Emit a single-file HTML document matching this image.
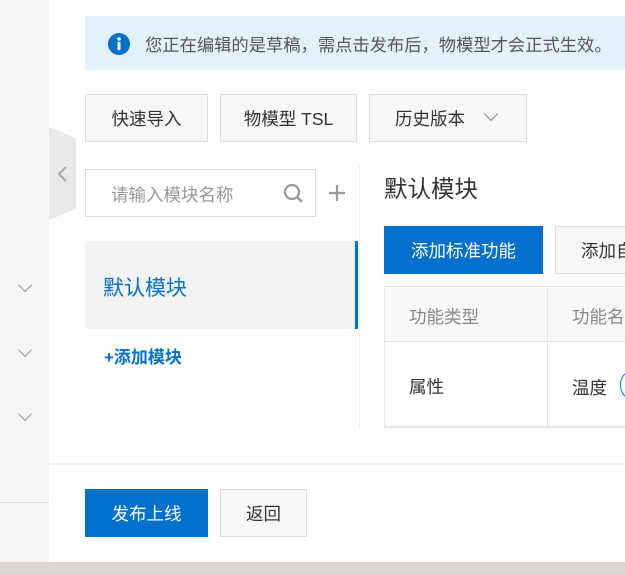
<!DOCTYPE html>
<html><head><meta charset="utf-8"><style>
*{box-sizing:border-box;margin:0;padding:0}
body{width:625px;height:575px;overflow:hidden;background:#dbd7d3;font-family:"Liberation Sans","Noto Sans CJK SC",sans-serif;position:relative}
.a{position:absolute;white-space:nowrap}
.btn{position:absolute;background:#f7f7f7;border:1px solid #dcdcdc;color:#333;font-size:17.5px;display:flex;align-items:center;justify-content:center;white-space:nowrap}
.pri{background:#0070cc;border-color:#0070cc;color:#fff}
.chev{position:absolute;width:10px;height:10px;border-right:1.6px solid #999;border-bottom:1.6px solid #999;transform:rotate(45deg)}
</style></head><body>
<div class="a" style="left:0;top:0;width:49px;height:562px;background:#f5f5f5"></div>
<div class="a" style="left:0;top:502px;width:49px;height:1px;background:#ddd"></div>
<div class="chev" style="left:20px;top:280px"></div>
<div class="chev" style="left:20px;top:345px"></div>
<div class="chev" style="left:20px;top:409px"></div>
<div class="a" style="left:49px;top:0;width:576px;height:562px;background:#fff"></div>
<svg class="a" style="left:49px;top:127px" width="28" height="94"><polygon points="0,0 27,11 27,82 0,93" fill="#e8e8e8"/><polyline points="17,40 10,47 17,54" fill="none" stroke="#aaa" stroke-width="2"/></svg>
<div class="a" style="left:85px;top:16px;width:540px;height:54px;background:#e3f1fd"></div>
<svg class="a" style="left:108px;top:33px" width="22" height="22"><circle cx="11" cy="11" r="11" fill="#0070cc"/><circle cx="11" cy="6" r="1.8" fill="#fff"/><rect x="9.5" y="9" width="3" height="8" fill="#fff"/></svg>
<div class="a" style="left:145px;top:31px;font-size:17.3px;color:#555">您正在编辑的是草稿，需点击发布后，物模型才会正式生效。</div>
<div class="btn" style="left:85px;top:94px;width:123px;height:48px">快速导入</div>
<div class="btn" style="left:220px;top:94px;width:137px;height:48px">物模型 TSL</div>
<div class="btn" style="left:369px;top:94px;width:158px;height:48px;justify-content:flex-start;padding-left:25px">历史版本</div>
<div class="chev" style="left:486px;top:109px;border-color:#888"></div>
<div class="a" style="left:85px;top:169px;width:231px;height:48px;border:1px solid #dcdcdc"></div>
<div class="a" style="left:111px;top:182px;font-size:17.5px;color:#999">请输入模块名称</div>
<svg class="a" style="left:283px;top:183px" width="22" height="22"><circle cx="9" cy="9" r="7" fill="none" stroke="#999" stroke-width="2.2"/><line x1="14" y1="14" x2="19" y2="19" stroke="#999" stroke-width="2.4"/></svg>
<svg class="a" style="left:328px;top:184px" width="18" height="18"><path d="M9 1V17M1 9H17" stroke="#999" stroke-width="2.2"/></svg>
<div class="a" style="left:359px;top:165px;width:1px;height:264px;background:#eee"></div>
<div class="a" style="left:85px;top:241px;width:273px;height:88px;background:#f3f3f3"></div>
<div class="a" style="left:355px;top:241px;width:3px;height:88px;background:#0070cc"></div>
<div class="a" style="left:103px;top:272px;font-size:21px;color:#0070cc">默认模块</div>
<div class="a" style="left:104px;top:343px;font-size:17px;color:#0070cc;font-weight:bold">+添加模块</div>
<div class="a" style="left:384px;top:170px;font-size:23.5px;color:#333">默认模块</div>
<div class="btn pri" style="left:384px;top:226px;width:159px;height:48px">添加标准功能</div>
<div class="btn" style="left:555px;top:226px;width:90px;height:48px;justify-content:flex-start;padding-left:25px;overflow:hidden">添加自定义</div>
<div class="a" style="left:384px;top:286px;width:260px;height:142px;border:1px solid #e6e6e6;border-bottom-width:2px"></div>
<div class="a" style="left:385px;top:287px;width:240px;height:55px;background:#f9f9f9;border-bottom:1px solid #e6e6e6"></div>
<div class="a" style="left:547px;top:287px;width:1px;height:140px;background:#e6e6e6"></div>
<div class="a" style="left:409px;top:304px;font-size:17.5px;color:#888">功能类型</div>
<div class="a" style="left:572px;top:304px;font-size:17.5px;color:#888">功能名称</div>
<div class="a" style="left:409px;top:374px;font-size:17.5px;color:#333">属性</div>
<div class="a" style="left:572px;top:375px;font-size:17.5px;color:#333">温度</div>
<div class="a" style="left:620px;top:372px;width:18px;height:26px;border:1.5px solid #0070cc;border-radius:50%"></div>
<div class="a" style="left:49px;top:463px;width:576px;height:2px;background:#f2f2f2"></div>
<div class="btn pri" style="left:85px;top:489px;width:123px;height:48px">发布上线</div>
<div class="btn" style="left:220px;top:489px;width:87px;height:48px">返回</div>
</body></html>
